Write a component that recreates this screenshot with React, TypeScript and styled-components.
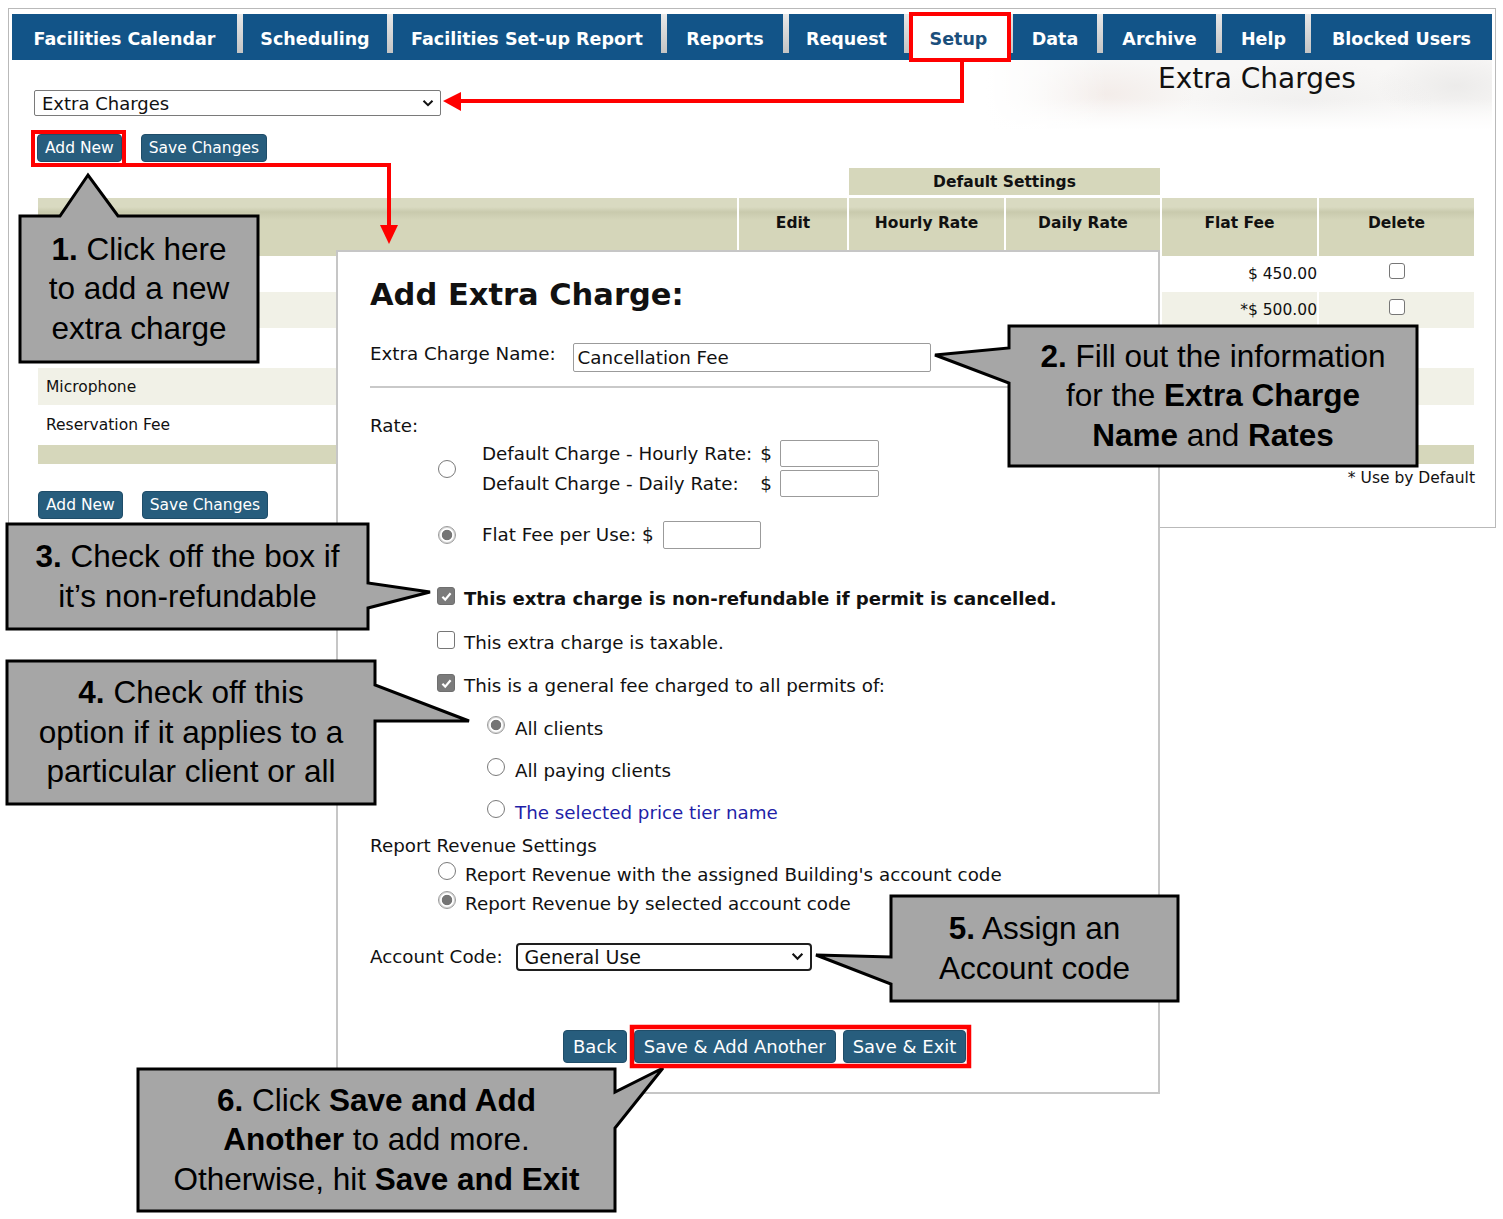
import React from "react";
import styled, { createGlobalStyle } from "styled-components";

const GlobalStyle = createGlobalStyle`
  html, body {
    margin: 0;
    padding: 0;
    background: #ffffff;
  }
  body {
    font-family: "DejaVu Sans", Verdana, sans-serif;
    color: #111111;
  }
  * {
    box-sizing: border-box;
  }
`;

const Page = styled.div`
  position: relative;
  width: 1503px;
  height: 1219px;
  overflow: hidden;
  padding: 8px 0 0 8px;
`;

const AppFrame = styled.div`
  width: 1488px;
  height: 520px;
  border: 1px solid #b9b9b9;
  padding: 5px 3px 0 3px;
  display: flex;
  flex-direction: column;
`;

const TabBar = styled.nav`
  display: flex;
  height: 46px;
  background: #125488;
`;

const Tab = styled.div<{ $w?: number; $active?: boolean }>`
  ${(p) => (p.$w ? `width: ${p.$w}px; flex-shrink: 0;` : "flex: 1;")}
  height: 100%;
  display: flex;
  align-items: center;
  justify-content: center;
  padding-top: 3px;
  background: ${(p) => (p.$active ? "#ffffff" : "transparent")};
  color: ${(p) => (p.$active ? "#1b4f7c" : "#ffffff")};
  font-weight: bold;
  font-size: 17.5px;
  white-space: nowrap;
`;

const TabDivider = styled.div`
  width: 6px;
  height: 39px;
  flex-shrink: 0;
  background: linear-gradient(#e8e8e8, #c4c4c4);
`;

const HeaderRow = styled.div`
  display: flex;
  justify-content: space-between;
  align-items: flex-start;
`;

const Controls = styled.div`
  display: flex;
  flex-direction: column;
  padding: 30px 0 0 22px;
`;

const SelectBox = styled.div<{ $w: number; $h: number; $strong?: boolean }>`
  width: ${(p) => p.$w}px;
  height: ${(p) => p.$h}px;
  display: flex;
  align-items: center;
  justify-content: space-between;
  padding: 0 6px 0 7px;
  background: #ffffff;
  border: ${(p) => (p.$strong ? "2px solid #1e1e1e" : "1px solid #7a7a7a")};
  border-radius: ${(p) => (p.$strong ? "4px" : "2px")};
  font-size: ${(p) => (p.$strong ? "19px" : "18px")};
  color: #111111;
`;

const ButtonRow = styled.div<{ $gap: number; $pad?: number; $mt?: number }>`
  display: flex;
  gap: ${(p) => p.$gap}px;
  padding-left: ${(p) => p.$pad ?? 0}px;
  margin-top: ${(p) => p.$mt ?? 0}px;
`;

const Button = styled.button<{ $big?: boolean }>`
  height: ${(p) => (p.$big ? 33 : 28)}px;
  padding: 0 ${(p) => (p.$big ? 9 : 7)}px;
  background: #275d7d;
  border: 1px solid #1f4d69;
  border-radius: 4px;
  color: #ffffff;
  font-family: "DejaVu Sans", Verdana, sans-serif;
  font-size: ${(p) => (p.$big ? 18 : 15.5)}px;
  cursor: pointer;
`;

const Banner = styled.div`
  width: 506px;
  height: 70px;
  flex-shrink: 0;
  padding: 2px 0 0 172px;
  font-size: 28px;
  color: #111111;
  background:
    linear-gradient(to right, #ffffff 0%, rgba(255, 255, 255, 0) 24%),
    linear-gradient(to bottom, rgba(255, 255, 255, 0) 55%, #ffffff 100%),
    radial-gradient(ellipse 90px 34px at 120px 34px, rgba(196, 130, 106, 0.09), transparent),
    radial-gradient(ellipse 130px 44px at 320px 44px, rgba(150, 150, 150, 0.08), transparent),
    radial-gradient(ellipse 80px 36px at 470px 26px, rgba(130, 130, 130, 0.1), transparent),
    #f8f7f6;
`;

const COLS = "699px 108px 155px 154px 155px 155px";

const Table = styled.div`
  margin: 6px 17px 0 26px;
  display: flex;
  flex-direction: column;
  font-size: 15.5px;
`;

const Row = styled.div<{ $h: number; $mt?: number }>`
  display: grid;
  grid-template-columns: ${COLS};
  column-gap: 2px;
  height: ${(p) => p.$h}px;
  margin-top: ${(p) => p.$mt ?? 0}px;
`;

const GroupHead = styled.div`
  grid-column: 3 / span 2;
  display: flex;
  align-items: center;
  justify-content: center;
  background: #d6d7bb;
  font-weight: bold;
  font-size: 15.5px;
`;

const HeadCell = styled.div`
  display: flex;
  justify-content: center;
  padding-top: 16px;
  font-weight: bold;
  font-size: 15.5px;
  background: linear-gradient(
    #d9dac1 0,
    #d9dac1 9px,
    #c9caad 14px,
    #d5d6ba 22px,
    #d5d6ba 100%
  );
`;

const Cell = styled.div<{ $tone: "white" | "light" | "olive"; $align?: string }>`
  display: flex;
  align-items: center;
  justify-content: ${(p) => p.$align ?? "flex-start"};
  padding-left: ${(p) => (p.$align ? 0 : 8)}px;
  background: ${(p) =>
    p.$tone === "light" ? "#f1f1e7" : p.$tone === "olive" ? "#d6d7bb" : "#ffffff"};
`;

const DeleteCell = styled(Cell)`
  align-items: flex-start;
  padding-top: 7px;
`;

const BoxInput = styled.span<{ $on?: boolean; $size?: number }>`
  width: ${(p) => p.$size ?? 18}px;
  height: ${(p) => p.$size ?? 18}px;
  flex-shrink: 0;
  display: inline-flex;
  align-items: center;
  justify-content: center;
  border-radius: 3px;
  border: 1px solid ${(p) => (p.$on ? "#6f6f6f" : "#767676")};
  background: ${(p) => (p.$on ? "#7b7b7b" : "#ffffff")};
`;

const RadioInput = styled.span<{ $on?: boolean }>`
  width: 18px;
  height: 18px;
  flex-shrink: 0;
  border-radius: 50%;
  border: 1px solid ${(p) => (p.$on ? "#9a9a9a" : "#7a7a7a")};
  background: ${(p) =>
    p.$on
      ? "radial-gradient(circle, #757575 0, #757575 4.8px, #ffffff 5.6px)"
      : "#ffffff"};
  box-shadow: ${(p) => (p.$on ? "inset 0 0 0 1px #d4d4d4" : "none")};
`;

const Legend = styled.div`
  display: flex;
  justify-content: flex-end;
  margin-top: 5px;
  line-height: 18px;
`;

const Modal = styled.section`
  position: absolute;
  left: 336px;
  top: 250px;
  width: 824px;
  height: 844px;
  background: #ffffff;
  border: 2px solid #c6c6c6;
  padding: 25px 32px 0 32px;
  font-size: 18.3px;
  line-height: 22px;
  z-index: 2;
`;

const ModalTitle = styled.h2`
  margin: 0;
  font-size: 30.5px;
  line-height: 36px;
  font-weight: bold;
`;

const Line = styled.div<{
  $mt: number;
  $pad?: number;
  $gap?: number;
  $h?: number;
  $top?: boolean;
}>`
  display: flex;
  align-items: ${(p) => (p.$top ? "flex-start" : "center")};
  margin-top: ${(p) => p.$mt}px;
  padding-left: ${(p) => p.$pad ?? 0}px;
  gap: ${(p) => p.$gap ?? 0}px;
  ${(p) => (p.$h ? `height: ${p.$h}px;` : "")}
  white-space: nowrap;
`;

const TextInput = styled.div<{ $w: number; $h: number }>`
  width: ${(p) => p.$w}px;
  height: ${(p) => p.$h}px;
  flex-shrink: 0;
  display: flex;
  align-items: center;
  padding-left: 4px;
  border: 1px solid #9b9b9b;
  border-radius: 2px;
  background: #ffffff;
`;

const Divider = styled.hr`
  margin: 14px 0 0 0;
  border: none;
  height: 2px;
  background: #c9c9c9;
`;

const RateGrid = styled.div`
  display: grid;
  grid-template-columns: auto auto auto;
  column-gap: 8px;
  row-gap: 3px;
  align-items: center;
`;

const Strong = styled.span`
  font-weight: bold;
`;

const Notice = styled.span`
  font-weight: bold;
  font-size: 18.1px;
`;

const LinkText = styled.span`
  color: #1f1fa8;
`;

const CheckSlot = styled.span`
  display: flex;
  margin-bottom: 5px;
`;

const RadioSlot = styled.span`
  display: flex;
  margin-bottom: 8px;
`;

const Overlay = styled.svg`
  position: absolute;
  left: 0;
  top: 0;
  z-index: 3;
  pointer-events: none;
`;

const CalloutText = styled.div<{ $x: number; $y: number; $w: number; $h: number }>`
  position: absolute;
  left: ${(p) => p.$x}px;
  top: ${(p) => p.$y}px;
  width: ${(p) => p.$w}px;
  height: ${(p) => p.$h}px;
  z-index: 4;
  display: flex;
  align-items: center;
  justify-content: center;
  text-align: center;
  font-family: "Liberation Sans", Arial, sans-serif;
  font-size: 31.5px;
  line-height: 39.5px;
  color: #000000;
`;

const Chevron = ({ size = 12 }: { size?: number }) => (
  <svg width={size} height={size * 0.7} viewBox="0 0 12 8">
    <path d="M1.5 1.5 L6 6 L10.5 1.5" stroke="#111" strokeWidth="2" fill="none" />
  </svg>
);

const Checkbox = ({ on, size }: { on?: boolean; size?: number }) => (
  <BoxInput $on={on} $size={size}>
    {on && (
      <svg width="13" height="13" viewBox="0 0 13 13">
        <path d="M2.4 6.8 L5.2 9.6 L10.6 3.2" stroke="#fff" strokeWidth="2.2" fill="none" />
      </svg>
    )}
  </BoxInput>
);

const tabs: { label: string; w?: number; active?: boolean }[] = [
  { label: "Facilities Calendar", w: 225 },
  { label: "Scheduling", w: 144 },
  { label: "Facilities Set-up Report", w: 268 },
  { label: "Reports", w: 116 },
  { label: "Request", w: 115 },
  { label: "Setup", w: 97, active: true },
  { label: "Data", w: 84 },
  { label: "Archive", w: 113 },
  { label: "Help", w: 83 },
  { label: "Blocked Users" },
];

// rows partly sit under the dialog, so only the visible cells carry text
const charges = [
  { name: "", flat: "$ 450.00", h: 36 },
  { name: "", flat: "*$ 500.00", h: 36 },
  { name: "", flat: "", h: 40 },
  { name: "Microphone", flat: "", h: 37 },
  { name: "Reservation Fee", flat: "", h: 39 },
];

type Callout = {
  box: [number, number, number, number];
  points: string;
  text: React.ReactNode;
};

const callouts: Callout[] = [
  {
    box: [20, 216, 238, 146],
    points: "20,216 60,216 88,175 118,216 258,216 258,362 20,362",
    text: (
      <span>
        <Strong>1.</Strong> Click here
        <br />
        to add a new
        <br />
        extra charge
      </span>
    ),
  },
  {
    box: [1009, 326, 408, 140],
    points: "1009,326 1417,326 1417,466 1009,466 1009,383 935,355 1009,348",
    text: (
      <span>
        <Strong>2.</Strong> Fill out the information
        <br />
        for the <Strong>Extra Charge</Strong>
        <br />
        <Strong>Name</Strong> and <Strong>Rates</Strong>
      </span>
    ),
  },
  {
    box: [7, 524, 361, 105],
    points: "7,524 368,524 368,583 430,592 368,608 368,629 7,629",
    text: (
      <span>
        <Strong>3.</Strong> Check off the box if
        <br />
        it’s non-refundable
      </span>
    ),
  },
  {
    box: [7, 661, 368, 143],
    points: "7,661 375,661 375,685 469,721 375,721 375,804 7,804",
    text: (
      <span>
        <Strong>4.</Strong> Check off this
        <br />
        option if it applies to a
        <br />
        particular client or all
      </span>
    ),
  },
  {
    box: [891, 896, 287, 105],
    points: "891,896 1178,896 1178,1001 891,1001 891,984 816,955 891,957",
    text: (
      <span>
        <Strong>5.</Strong> Assign an
        <br />
        Account code
      </span>
    ),
  },
  {
    box: [138, 1069, 477, 142],
    points: "138,1069 615,1069 615,1092 663,1068 615,1128 615,1211 138,1211",
    text: (
      <span>
        <Strong>6.</Strong> Click <Strong>Save and Add</Strong>
        <br />
        <Strong>Another</Strong> to add more.
        <br />
        Otherwise, hit <Strong>Save and Exit</Strong>
      </span>
    ),
  },
];

const App = () => {
  return (
    <Page>
      <GlobalStyle />
      <AppFrame>
        <TabBar>
          {tabs.map((t, i) => (
            <React.Fragment key={t.label}>
              {i > 0 && <TabDivider />}
              <Tab $w={t.w} $active={t.active}>
                {t.label}
              </Tab>
            </React.Fragment>
          ))}
        </TabBar>

        <HeaderRow>
          <Controls>
            <SelectBox $w={407} $h={26}>
              Extra Charges
              <Chevron />
            </SelectBox>
            <ButtonRow $gap={19} $pad={3} $mt={18}>
              <Button>Add New</Button>
              <Button>Save Changes</Button>
            </ButtonRow>
          </Controls>
          <Banner>Extra Charges</Banner>
        </HeaderRow>

        <Table>
          <Row $h={27}>
            <GroupHead>Default Settings</GroupHead>
          </Row>
          <Row $h={58} $mt={3}>
            <HeadCell />
            <HeadCell>Edit</HeadCell>
            <HeadCell>Hourly Rate</HeadCell>
            <HeadCell>Daily Rate</HeadCell>
            <HeadCell>Flat Fee</HeadCell>
            <HeadCell>Delete</HeadCell>
          </Row>
          {charges.map((c, i) => {
            const tone = i % 2 === 1 ? "light" : "white";
            return (
              <Row key={i} $h={c.h}>
                <Cell $tone={tone}>{c.name}</Cell>
                <Cell $tone={tone} />
                <Cell $tone={tone} />
                <Cell $tone={tone} />
                <Cell $tone={tone} $align="flex-end">
                  {c.flat}
                </Cell>
                <DeleteCell $tone={tone} $align="center">
                  <Checkbox size={16} />
                </DeleteCell>
              </Row>
            );
          })}
          <Row $h={19} $mt={1}>
            <Cell $tone="olive" />
            <Cell $tone="olive" />
            <Cell $tone="olive" />
            <Cell $tone="olive" />
            <Cell $tone="olive" />
            <Cell $tone="olive" />
          </Row>
          <Legend>* Use by Default</Legend>
          <ButtonRow $gap={19} $mt={4}>
            <Button>Add New</Button>
            <Button>Save Changes</Button>
          </ButtonRow>
        </Table>
      </AppFrame>

      <Modal>
        <ModalTitle>Add Extra Charge:</ModalTitle>
        <Line $mt={30} $gap={17} $top>
          Extra Charge Name:
          <TextInput $w={358} $h={29}>
            Cancellation Fee
          </TextInput>
        </Line>
        <Divider />
        <Line $mt={27}>Rate:</Line>
        <Line $mt={3} $pad={68} $gap={26}>
          <RadioInput />
          <RateGrid>
            <span>Default Charge - Hourly Rate:</span>
            <span>$</span>
            <TextInput $w={99} $h={27} />
            <span>Default Charge - Daily Rate:</span>
            <span>$</span>
            <TextInput $w={99} $h={27} />
          </RateGrid>
        </Line>
        <Line $mt={24} $pad={68} $gap={26} $h={28}>
          <RadioInput $on />
          <Line $mt={0} $gap={9}>
            Flat Fee per Use: $
            <TextInput $w={98} $h={28} />
          </Line>
        </Line>
        <Line $mt={38} $pad={67} $gap={9}>
          <CheckSlot>
            <Checkbox on />
          </CheckSlot>
          <Notice>This extra charge is non-refundable if permit is cancelled.</Notice>
        </Line>
        <Line $mt={21} $pad={67} $gap={9}>
          <CheckSlot>
            <Checkbox />
          </CheckSlot>
          This extra charge is taxable.
        </Line>
        <Line $mt={20} $pad={67} $gap={9}>
          <CheckSlot>
            <Checkbox on />
          </CheckSlot>
          This is a general fee charged to all permits of:
        </Line>
        <Line $mt={19} $pad={117} $gap={10}>
          <RadioSlot>
            <RadioInput $on />
          </RadioSlot>
          All clients
        </Line>
        <Line $mt={16} $pad={117} $gap={10}>
          <RadioSlot>
            <RadioInput />
          </RadioSlot>
          All paying clients
        </Line>
        <Line $mt={16} $pad={117} $gap={10}>
          <RadioSlot>
            <RadioInput />
          </RadioSlot>
          <LinkText>The selected price tier name</LinkText>
        </Line>
        <Line $mt={9}>Report Revenue Settings</Line>
        <Line $mt={5} $pad={68} $gap={9}>
          <RadioSlot>
            <RadioInput />
          </RadioSlot>
          Report Revenue with the assigned Building's account code
        </Line>
        <Line $mt={3} $pad={68} $gap={9}>
          <RadioSlot>
            <RadioInput $on />
          </RadioSlot>
          Report Revenue by selected account code
        </Line>
        <Line $mt={26} $gap={13}>
          Account Code:
          <SelectBox $w={296} $h={28} $strong>
            General Use
            <Chevron size={13} />
          </SelectBox>
        </Line>
        <ButtonRow $gap={7} $pad={193} $mt={59}>
          <Button $big>Back</Button>
          <Button $big>Save &amp; Add Another</Button>
          <Button $big>Save &amp; Exit</Button>
        </ButtonRow>
      </Modal>

      <Overlay width="1503" height="1219" viewBox="0 0 1503 1219">
        {callouts.map((c, i) => (
          <polygon
            key={i}
            points={c.points}
            fill="#a6a6a6"
            stroke="#000"
            strokeWidth="3"
            strokeLinejoin="miter"
          />
        ))}
        <g fill="none" stroke="#ff0000" strokeWidth="4">
          <rect x="911" y="14" width="98" height="46" />
          <rect x="33" y="132" width="91" height="33" />
          <rect x="632" y="1027" width="337" height="39" strokeWidth="4.5" />
          <polyline points="962,60 962,101 458,101" />
          <polyline points="124,165 389,165 389,228" />
        </g>
        <g fill="#ff0000">
          <polygon points="443,101 461,92 461,111" />
          <polygon points="389,244 380,225 398,225" />
        </g>
      </Overlay>

      {callouts.map((c, i) => (
        <CalloutText key={i} $x={c.box[0]} $y={c.box[1]} $w={c.box[2]} $h={c.box[3]}>
          {c.text}
        </CalloutText>
      ))}
    </Page>
  );
};

export default App;
